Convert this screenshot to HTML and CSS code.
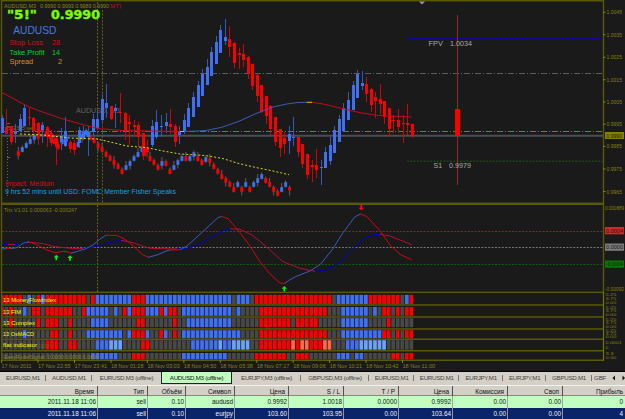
FILE: index.html
```html
<!DOCTYPE html>
<html lang="ru">
<head>
<meta charset="utf-8">
<title>AUDUSD,M3</title>
<link rel="stylesheet" href="styles.css">
</head>
<body>
<main class="terminal">
  <svg class="chart" id="chart" width="625" height="371" viewBox="0 0 625 371"></svg>
  <nav class="tabs">
    <span class="tab w46">EURUSD,M1</span>
    <span class="tab w46">AUDUSD,M1</span>
    <span class="tab w69 plain">EURUSD,M3 (offline)</span>
    <span class="tab active">AUDUSD,M3 (offline)</span>
    <span class="tab w69">EURJPY,M3 (offline)</span>
    <span class="tab w68">GBPUSD,M3 (offline)</span>
    <span class="tab w45">EURUSD,M1</span>
    <span class="tab w45">EURUSD,M1</span>
    <span class="tab w44">EURJPY,M1</span>
    <span class="tab w44">EURJPY,M1</span>
    <span class="tab w45">GBPUSD,M1</span>
    <span class="tab last">GBF</span>
    <svg class="scroll" width="16" height="6" viewBox="0 0 16 6"><path d="M4 0.5V5.5L1.5 3ZM11.5 0.5V5.5L14 3Z"/></svg>
  </nav>
  <section class="orders">
    <div class="row head"><span>Время</span><span>Тип</span><span>Объём</span><span>Символ</span><span>Цена</span><span>S / L</span><span>T / P</span><span>Цена</span><span>Комиссия</span><span>Своп</span><span>Прибыль</span></div>
    <div class="row green"><span>2011.11.18 11:06</span><span>sell</span><span>0.10</span><span>audusd</span><span>0.9992</span><span>1.0018</span><span>0.0000</span><span>0.9992</span><span>0.00</span><span>0.00</span><span>0</span></div>
    <div class="row navy"><span>2011.11.18 11:06</span><span>sell</span><span>0.10</span><span>eurjpy</span><span>103.60</span><span>103.95</span><span>0.00</span><span>103.64</span><span>0.00</span><span>0.00</span><span>4</span></div>
  </section>
</main>
<script src="chart.js"></script>
</body>
</html>
```
FILE: styles.css
```css
* { box-sizing: border-box; }
body { margin: 0; background: #d4d0c8; overflow: hidden; }
.terminal { width: 625px; height: 419px; display: flex; flex-direction: column; font-family: "Liberation Sans", sans-serif; }
.chart { display: block; flex: none; background: #1a1a1a; font-family: "Liberation Sans", sans-serif; }
.thin { fill: none; stroke-width: 1; }
.frame { fill: none; stroke: #5c5a00; stroke-width: 1.4; }
.heavy { font-family: "DejaVu Sans", sans-serif; font-weight: bold; stroke: #7cfc00; stroke-width: 0.4; }

.tabs { height: 14px; flex: none; display: flex; align-items: flex-start; background: #d4d0c8; border-top: 1px solid #000; font-size: 6.2px; letter-spacing: -0.28px; color: #45423e; white-space: nowrap; }
.tab { height: 12px; line-height: 12px; text-align: center; position: relative; flex: none; }
.tab::after { content: ""; position: absolute; right: 0; top: 3px; height: 6px; width: 1px; background: #77746e; }
.tab.plain::after, .tab.active::after, .tab.last::after { display: none; }
.w44 { width: 43.5px; }
.w45 { width: 45.2px; }
.w46 { width: 46px; }
.w68 { width: 68px; }
.w69 { width: 69px; }
.active { width: 71px; background: #c0ffc0; color: #111; border: 1px solid #222; border-top: 0; line-height: 11px; }
.last { width: 17px; }
.scroll { margin: 3px 0 0 2px; fill: #111; flex: none; }

.orders { flex: 1; display: flex; flex-direction: column; font-size: 6.4px; }
.row { display: grid; grid-template-columns: 98px 50px 38px 49px 54px 55px 55px 54px 55px 55px 62px; text-align: right; line-height: 12px; color: #10180f; }
.row span { border-right: 1px solid #9aa894; padding-right: 1px; }
.row span:last-child { border-right: 0; padding-right: 2px; }
.head { height: 11px; line-height: 11px; color: #111; border-top: 1px solid #f4f2ee; border-bottom: 1px solid #8a8780; }
.head span { border-right: 1px solid #55524e; padding-right: 3px; }
.green { height: 12px; background: #c0ffc0; }
.navy { height: 11px; line-height: 11px; background: #0a246a; color: #f0f2f8; }
.navy span { border-color: #8a93b0; }
```
FILE: chart.js
```js
const svg = document.getElementById('chart');
const BLUE = '#4070f0', RED = '#fb0000', OLIVE = '#858210', GREY = '#484848';

function add(tag, attrs, text) {
  const el = document.createElementNS('http://www.w3.org/2000/svg', tag);
  for (const k in attrs) el.setAttribute(k, attrs[k]);
  if (text !== undefined) el.textContent = text;
  svg.appendChild(el);
}
const rect = (x, y, width, height, fill) => add('rect', { x, y, width, height, fill });
function line(x1, y1, x2, y2, stroke, dash, w) {
  add('line', { x1, y1, x2, y2, stroke, 'stroke-width': w || 1, 'stroke-dasharray': dash || 'none' });
}
function text(x, y, size, fill, str, w, cls) {
  const a = { x, y, 'font-size': size, fill };
  if (w) { a.textLength = w; a.lengthAdjust = 'spacingAndGlyphs'; }
  if (cls) a.class = cls;
  add('text', a, str);
}
function curve(stroke, pts, dash) {
  add('polyline', { points: pts, stroke, class: 'thin', 'stroke-dasharray': dash || 'none' });
}

// Panel frames
add('rect', { x: 1.5, y: 0.7, width: 602, height: 202.6, class: 'frame' });
add('rect', { x: 1.5, y: 204.3, width: 602, height: 88, class: 'frame' });
line(97.5, 2, 97.5, 203, '#66602a', '2 1.4');
line(102.5, 10, 102.5, 203, '#66600a', '2 1.4');
line(97.5, 205, 97.5, 292, '#66602a', '2 1.4');
line(7.5, 123, 7.5, 197, '#666', '1 2');
line(7, 123.5, 10, 123.5, '#666');
line(7, 157.5, 10, 157.5, '#666');

// Levels
line(2, 73.5, 603, 73.5, '#5c5c5c', '6 2 1 2');
line(2, 135.7, 603, 135.7, '#465056', '', 2);
line(2, 131.5, 603, 131.5, '#2ca02c', '6 2 1 2');
line(407, 38.5, 603, 38.5, '#0000e0', '2 1.3');
line(407, 161.2, 603, 161.2, '#1e5a1e', '2 1.3');
text(76, 112.5, 7.5, '#626262', 'AUDUSD, M3', 44);
text(5, 130, 5, '#7f7c10', '#552315 sell', 29);

// Second series, one body per 4 px: top and direction
const bricks = '151R 147B 143B 139B 135B 134R 127R 131R 134R 139R 144R 139B 137B 143R 145R 142B 134B 130B 135R 138R 143R 147R 152R 156R 160R 164R 169R 165B 161B 156B 152B 147B 148R 156R 160R 165R 161B 161R 169R 165B 160B 156B 156R 156B 152B 156R 160R 157B 158R 164R 169R 174R 178R 182R 187R 182B 187R 182B 187R 182B 178B 174B 178R 182R 187R 191R 187B 182B 187R'.split(' ');
bricks.forEach((b, i) => {
  const x = 18.3 + i * 3.99, y = parseInt(b, 10);
  line(x, y - (i % 3 ? 1.5 : 4), x, y + (i % 4 ? 5.5 : 8.5), '#606060');
  rect(x - 1.5, y + 0.2, 3, i === 68 ? 3 : 4.6, b.endsWith('B') ? BLUE : RED);
});

// x, high, body top, body bottom, low, colour
const candles = `2.3 115 118 133 133 B|6.7 109 127 134 134 R|11 126 126 142 145 R|15.3 124 132 134 143 B|20.3 114 119 131 132 B|24.5 104 108 126 127 B|29.3 108 117 118 126 R|33.8 117 118 131 133 R|38.2 122 123 135 145 R|42.5 122 125 130 143 B|47 126 127 137 147 R|51 130 133 143 146 R|56 135 138 147 165 R|61.5 128 136 142 150 B|65.7 117 131 146 147 B|70.5 140 142 149 153 R|74.8 140 143 150 155 R|79.3 127 130 143 148 B|83.7 126 132 138 140 B|88.3 126 132 137 156 B|93.3 114 119 132 136 B|97.7 112 119 128 130 B|102.3 94 99 120 122 B|106.7 84 103 108 118 B|111.5 106 106 119 120 R|115.7 104 108 111 128 B|120.3 93 112 113 123 R|125 112 113 131 140 R|129.7 115 122 124 145 R|134 120 125 127 137 R|138.5 122 125 137 147 R|143 133 133 156 160 R|147.5 140 148 152 157 R|152.3 120 126 145 147 B|156.8 110 122 137 139 B|161.5 115 126 127 137 B|166 113 122 126 133 B|170.5 109 124 127 134 R|175.3 124 126 142 147 R|179.8 126 131 135 144 B|184.3 114 120 132 134 B|188.7 103 108 127 127 B|193.3 92 97 117 117 B|198 81 85 107 107 B|202.3 69 74 96 96 B|207 59 67 85 85 B|211.3 47 52 76 76 B|216.3 36 42 64 64 B|220.7 25 30 53 53 B|225.3 19 37 41 45 B|229.7 26 39 47 57 R|234.3 42 43 63 68 R|239 48 53 55 69 R|243.3 44 54 60 67 R|248 56 57 73 79 R|252.7 64 64 86 90 R|257.3 74 75 96 102 R|261.7 85 85 112 113 R|266.3 96 96 116 124 R|270.7 105 106 129 135 R|275.3 117 117 142 146 R|280 129 129 148 157 R|284.3 132 138 144 154 R|289 126 134 141 154 B|293.3 117 137 138 146 B|298.3 137 137 152 157 R|302.7 144 144 164 168 R|307.3 154 154 175 179 R|312 160 165 167 182 R|316.3 149 165 170 178 R|321 160 167 168 185 B|325.3 147 152 168 168 B|330.3 137 145 161 165 B|334.3 126 130 153 153 B|339.3 115 119 142 142 B|343.7 103 108 131 131 B|348.7 92 100 120 120 B|353 81 85 110 110 B|357.3 70 74 98 98 B|362.3 71 83 86 90 B|366.7 77 84 94 102 R|371.3 88 89 105 112 R|375.7 92 97 101 118 R|380.3 84 99 104 114 R|384.7 101 101 117 124 R|389.7 108 108 129 137 R|393.7 115 120 121 133 R|398.3 109 120 127 133 R|403.3 115 123 124 143 R|407.3 104 123 125 135 R|412.3 124 124 136 138 R`;
candles.split('|').forEach(c => {
  const [x, hi, top, bot, lo, d] = c.split(' ');
  const px = Math.floor(+x);
  rect(px, +hi, 1, lo - hi, d === 'B' ? '#3458b8' : '#c80808');
  rect(px - 1, +top, 3, Math.max(1, bot - top), d === 'B' ? BLUE : RED);
});
rect(457, 15, 1, 170, '#8c2c28');
rect(455, 109, 5, 27, RED);

// Moving averages
curve('#c40c14', '1.7,92.7 6.7,95 25,105 36.7,110 63,119 88,126 100,128.7 123,130.5 180,131.5');
curve('#a8e000', '180,131.5 184,131.5');
curve('#3a5cb8', '184,131.5 205,130.7 221.7,127.3 238,121.7 255,114 271.7,107.3 286.7,104 297,102.6 306.7,102.3');
curve('#d8d000', '306.7,102.3 312,102.3');
curve('#c40c14', '312,102.3 323.3,104 340,108 360,112.7 376.7,115.3 389,116 411.5,117');
curve('#d8d820', '20,134 43,135 70,138 97,139 113,142.7 127,146 147,147.7 163,151 180,154 205,155.5 222,158.3 238,163.3 255,167.3 273,171 289,174.7', '2 2');

// Header block
text(4, 7.6, 5.6, '#8c8910', 'AUDUSD,M3', 32);
text(40, 7.6, 5.6, '#8c8910', '0.9990 0.9993 0.9989 0.9990', 69);
text(110, 7.6, 5.6, '#c01010', 'MT)', 11);
text(7, 18.5, 12.5, '#7cfc00', '"5!"', 30, 'heavy');
text(51, 18.5, 12.5, '#7cfc00', '0.9990', 49, 'heavy');
text(13.3, 34.4, 10.2, '#4a78e8', 'AUDUSD', 43);
[['Stop Loss', 33.5, '28', 52, 45.2, '#c81414'], ['Take Profit', 35, '14', 52, 54.6, '#00d42c'], ['Spread', 23.5, '2', 58, 64.3, '#d89028']]
  .forEach(([s, w, n, nx, y, c]) => { text(9.6, y, 7.3, c, s, w); text(nx, y, 7.3, c, n); });
text(5, 186.4, 7, '#d80c14', 'Impact: Medium', 49);
text(5, 193.9, 7, '#10a0e0', '9 hrs 52 mins until USD: FOMC Member Fisher Speaks', 171);
text(428.5, 45.7, 7.5, '#a8a8a8', 'FPV', 14.5);
text(450, 45.7, 7.5, '#a8a8a8', '1.0034', 22);
text(433.5, 168.2, 7.5, '#a8a8a8', 'S1', 8.5);
text(449, 168.2, 7.5, '#a8a8a8', '0.9979', 22);
add('path', { d: 'M419 1.5H425L422 4.5Z', fill: '#8c9cac' });

// Price scale
[['1.0045', 12.3], ['1.0035', 34.7], ['1.0025', 57.3], ['1.0015', 79.7], ['1.0005', 102], ['0.9995', 124.2], ['0.9985', 146.4], ['0.9975', 169], ['0.9965', 191.5]]
  .forEach(([s, y]) => { line(603, y, 605.5, y, OLIVE); text(606.5, y + 2, 5.5, OLIVE, s, 15.5); });
rect(605, 132, 19, 7, '#858200');
text(606.5, 137.5, 5.5, '#222000', '0.9990', 15.5);

// Trix oscillator
text(4, 212, 5.6, OLIVE, 'Trix V1.01 0.000063 -0.000247', 73);
line(2, 231.5, 603, 231.5, '#882828', '2 1.4');
line(2, 247.5, 603, 247.5, '#777', '2 1.4');
line(2, 264.5, 603, 264.5, '#0a620a', '2 1.4');
const slow = [
  ['#0000c8', '2,244.3 8,244.3'], ['#b01030', '8,244.3 15,244.5'], ['#0000c8', '15,244.5 21,244 27,242.3'],
  ['#b01030', '27,242.3 33,242.5 43,243.7 55,246.7 70,248.3 83,248.5'],
  ['#0000c8', '83,248.5 100,246 107,242.8 121,240.3'],
  ['#b01030', '121,240.3 133,242.7 142,246 150,248.3 177,249'],
  ['#0000c8', '177,249 187,248.3 197,245 210,238.3 217,234 223,230.6 230,228.7'],
  ['#b01030', '230,228.7 240,229.3 252,235 267,247.3 283,261.7 300,268.3 315,271.3'],
  ['#0000c8', '315,271.3 327,269.7 340,262.3 353,248.3 363,239.3 373,234.7 380,234.3'],
  ['#b01030', '380,234.3 390,236 400,240 411.7,244.7']];
const fast = [
  ['#3a5cb8', '2,249 6,248.7'], ['#d00808', '6,248.7 11,248.5'], ['#3a5cb8', '11,248.5 17,247.7 23,243.3 29,241.7'],
  ['#d00808', '29,241.7 37,245 47,250 55,252.7 62,251.5 67,251.7 71,253.3'],
  ['#3a5cb8', '71,253.3 77,251.5 85,249 93,245 100,239 106,235.3'],
  ['#d00808', '106,235.3 116.7,235.3 125,239.3 133,245.7 142,254.3 148,257.3'],
  ['#3a5cb8', '148,257.3 157,255 167,250.7 170,250'], ['#d00808', '170,250 180,249.7'],
  ['#3a5cb8', '180,249.7 187,246 200,234.2 210,225 218,217.6 221.7,216.5'],
  ['#d00808', '221.7,216.5 228,218.7 238,230 250,246 260,261.7 270,274 280,283 285,283.3'],
  ['#3a5cb8', '285,283.3 290,279.5 297,276 310,271 320,264.7 332,250 343,232.7 355,216.7 360.7,214'],
  ['#d00808', '360.7,214 367,216.7 380,230.7 390,245 400,254.3 411.7,259.7']];
slow.concat(fast).forEach(([c, p]) => curve(c, p));
[[56.3, 254.7], [70, 255.2], [284.3, 286]].forEach(([x, y]) =>
  add('path', { d: `M${x} ${y}l2.7 2.8h-1.8v2.7h-1.8v-2.7h-1.8z`, fill: '#00f020' }));
add('path', { d: 'M361.3 210.5l2.7-2.8h-1.8v-2.7h-1.8v2.7h-1.8z', fill: '#f01010' });
text(605, 210.3, 5.5, OLIVE, '0.000889', 19);
text(605, 290.7, 5.5, OLIVE, '-0.00092', 19);
[[227, '#d02828', '0.0004'], [243.5, '#7c7c7c', '0.0000'], [260.5, '#067806', '-0.0004']].forEach(([y, c, s]) => {
  rect(605, y, 19, 7.3, c);
  text(606, y + 5.6, 5.5, '#161616', s, 17);
});

// Signal strips: run lengths of R, B, G (grey), L (light blue), S (salmon)
const tint = { R: RED, B: BLUE, G: GREY, L: '#6aa4f8', S: '#ff6848' };
const strips = [
  [292.7, 305, 294.8, 9.2, '13 MoneyFlowIndex', 53, 'R5 G1 B1 G1 R1 B1 R9 G1 R1 B8 R3 B19 G1 B3 G1 R17 G1 B7 R7 G1 B1 R1'],
  [305, 317, 307, 8.8, '13 FIM', 18, 'R1 G1 R1 G2 B1 G1 R2 G1 R6 G2 R1 B5 G1 B1 G1 R1 B1 R3 B3 R1 B1 R2 G1 B11 G1 B1 G4 R15 G3 B6 G1 B1 G1 R2 G1 R1 G1 R2'],
  [317, 329, 318.2, 9, '13 Complex', 32, 'G2 R1 G5 R1 G1 R3 G2 R1 G4 B4 G6 R2 G6 R1 G2 B10 G6 R7 G1 R5 G5 B6 G4 R1 G5'],
  [329, 339.2, 330.2, 8, '13 OsMACD', 31, 'G5 B1 G5 R2 G2 R1 G3 B8 G1 B1 R3 B1 G2 R1 B1 G1 R1 G1 B13 G4 R15 G3 B9 R2 G1 R1 G1 R2'],
  [339.2, 350.8, 340.2, 9.5, 'flat indicator', 34, 'G10 R3 G2 R2 G4 B3 L3 G4 R2 G9 B6 L1 B2 L4 G2 R7 S1 R1 S2 R3 S2 G3 B3 L6 G6'],
  [350.8, 360.3, 353, 6.3, '', 0, 'G20 B6 G3 R3 G8 B10 G6 R7 G2 R3 G6 B3 G1 B2 G6 R2 G1 R2']];
strips.forEach(([top, bottom, y, h, name, w, runs]) => {
  let i = 0;
  runs.split(' ').forEach(r => {
    for (let n = +r.slice(1); n > 0; n--, i++) {
      const x = Math.max(2, i * 4.55);
      rect(x, y, i * 4.55 + 3.75 - x, h, tint[r[0]]);
    }
  });
  line(1, bottom, 604, bottom, '#5c5a00', '', 1.6);
  if (name) text(3, y + h / 2 + 2.2, 6, '#f8f800', name, w, 'label');
  const s = name === 'flat indicator' ? ['0.0001', '0'] : name ? ['5.25', '3.75', '0.00'] : ['3.3', '0.00'];
  const step = (bottom - top - 1.2) / s.length;
  s.forEach((v, k) => text(605.5, top + 0.4 + (k + 0.9) * step, Math.min(4.4, step), OLIVE, v, v.length * 2.7));
});
text(4, 358.6, 6, '#8a8724', 'EasyRyderSignal: 0.0000 0.0000 1.0000', 95);
text(38.5, 347.5, 5.5, '#77741c', '0.0 0.0', 11);
line(603.5, 292, 603.5, 361, '#77740a', '', 1.2);
line(1.5, 292, 1.5, 361, '#5c5a00', '', 1.2);

// Time scale
['17 Nov 2011', '17 Nov 22:55', '17 Nov 23:41', '18 Nov 01:28', '18 Nov 03:03', '18 Nov 04:50', '18 Nov 05:38', '18 Nov 07:17', '18 Nov 09:06', '18 Nov 10:21', '18 Nov 10:42', '18 Nov 11:00']
  .forEach((s, i) => { const x = 1.6 + i * 36.45; line(x, 360, x, 363, OLIVE); text(x, 368.3, 5.6, OLIVE, s, i ? 32.5 : 30); });
```
